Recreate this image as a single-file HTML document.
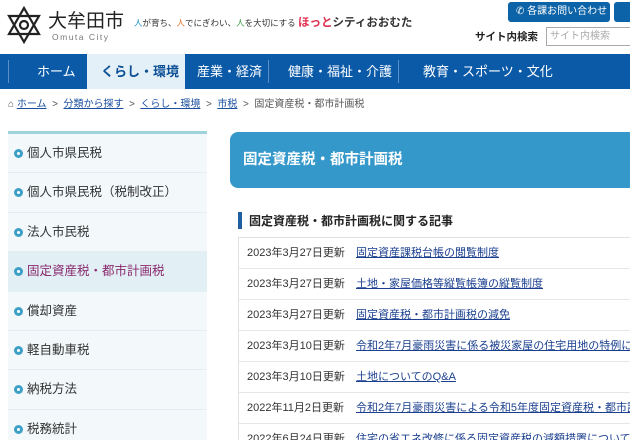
<!DOCTYPE html>
<html><head><meta charset="utf-8"><style>
*{margin:0;padding:0;box-sizing:border-box}
html,body{width:630px;height:440px;overflow:hidden}
body{background:#fff;font-family:"Liberation Sans","Noto Sans CJK JP",sans-serif;color:#333;position:relative}
.a{position:absolute;white-space:nowrap}
.nav{position:absolute;left:0;top:54px;width:630px;height:35px;background:#0b5aa8;overflow:hidden}
.nav span{position:absolute;top:0;height:35px;line-height:35px;color:#fff;font-size:13px}
.sep{position:absolute;top:6px;width:1px;height:23px;background:#5b8fc8}
.side{position:absolute;left:8px;top:131px;width:199px;border-top:3px solid #9fd3da;background:#f3f9fb}
.side div{height:39.4px;border-bottom:1px solid #e3eef2;font-size:12.5px;line-height:39px;padding-left:19px;position:relative;color:#333}
.side div:before{content:"";position:absolute;left:6px;top:15px;width:9px;height:9px;border-radius:50%;background:#3b9fc6}
.side div:after{content:"";position:absolute;left:9px;top:18px;width:3px;height:3px;background:#fff;border-radius:50%}
.side .on{background:#e2eff5;color:#8a2a6e}
.rows{position:absolute;left:238px;top:237px;width:392px;border:1px solid #e2e2e2;border-right:none;overflow:hidden}
.rows div{height:31px;line-height:31px;border-bottom:1px solid #e6e6e6;font-size:11px;padding-left:8px;white-space:nowrap;overflow:hidden}
.rows b{font-weight:normal;display:inline-block;width:109px;color:#333}
.rows u{color:#1a3f8f}
</style></head><body>
<svg class="a" style="left:6px;top:6px" width="36" height="38" viewBox="0 0 36 38"><g fill="none" stroke="#222" stroke-width="2.2"><path d="M18 2 L33 28 L3 28 Z"/><path d="M18 36 L3 10 L33 10 Z"/><circle cx="18" cy="19" r="4"/></g></svg>
<div class="a" style="left:48px;top:6px;font-size:19px;color:#222;letter-spacing:0">大牟田市</div>
<div class="a" style="left:52px;top:32px;font-size:8.5px;color:#777;letter-spacing:1.5px">Omuta City</div>
<div class="a" style="left:134px;top:14px;font-size:8.5px;color:#333"><span style="color:#1d8fc4">人</span>が育ち、<span style="color:#e07020">人</span>でにぎわい、<span style="color:#3a9a40">人</span>を大切にする <span style="color:#e03050;font-size:11.5px;font-weight:bold">ほっと</span><span style="font-size:11.5px;font-weight:bold">シティおおむた</span></div>
<div class="a" style="left:508px;top:2px;width:102px;height:20px;background:#0c63a8;border-radius:3px;color:#fff;font-size:10px;line-height:20px;padding-left:8px">✆ 各課お問い合わせ</div>
<div class="a" style="left:614px;top:2px;width:30px;height:20px;background:#0c63a8;border-radius:3px"></div>
<div class="a" style="left:475px;top:29px;font-size:10.5px;font-weight:bold;color:#222">サイト内検索</div>
<div class="a" style="left:546px;top:27px;width:90px;height:19px;border:1px solid #aaa;font-size:10px;color:#aaa;line-height:17px;padding-left:3px">サイト内検索</div>
<div class="nav">
<div class="sep" style="left:8px"></div>
<span style="left:37px">ホーム</span>
<div style="position:absolute;left:87px;top:0;width:98px;height:35px;background:#e4f0f7"></div>
<span style="left:101px;color:#0b4f95;font-weight:bold">くらし・環境</span>
<span style="left:197px">産業・経済</span>
<div class="sep" style="left:268px"></div>
<span style="left:288px">健康・福祉・介護</span>
<div class="sep" style="left:398px"></div>
<span style="left:423px">教育・スポーツ・文化</span>
</div>
<div class="a" style="left:8px;top:95px;font-size:10px;color:#555">⌂ <u style="color:#1a4f9f">ホーム</u> &nbsp;&gt;&nbsp; <u style="color:#1a4f9f">分類から探す</u> &nbsp;&gt;&nbsp; <u style="color:#1a4f9f">くらし・環境</u> &nbsp;&gt;&nbsp; <u style="color:#1a4f9f">市税</u> &nbsp;&gt;&nbsp; 固定資産税・都市計画税</div>
<div class="side">
<div>個人市県民税</div><div>個人市県民税（税制改正）</div><div>法人市民税</div><div class="on">固定資産税・都市計画税</div><div>償却資産</div><div>軽自動車税</div><div>納税方法</div><div>税務統計</div>
</div>
<div class="a" style="left:230px;top:132px;width:400px;height:56px;background:#3598cb;border-radius:8px 0 0 8px;color:#fff;font-size:14.5px;font-weight:bold;line-height:56px;padding-left:13px">固定資産税・都市計画税</div>
<div class="a" style="left:238px;top:212px;width:4px;height:17px;background:#1f5f9f"></div>
<div class="a" style="left:249px;top:212px;font-size:12px;font-weight:bold;color:#222">固定資産税・都市計画税に関する記事</div>
<div class="rows">
<div><b>2023年3月27日更新</b><u>固定資産課税台帳の閲覧制度</u></div>
<div><b>2023年3月27日更新</b><u>土地・家屋価格等縦覧帳簿の縦覧制度</u></div>
<div><b>2023年3月27日更新</b><u>固定資産税・都市計画税の減免</u></div>
<div><b>2023年3月10日更新</b><u>令和2年7月豪雨災害に係る被災家屋の住宅用地の特例について</u></div>
<div><b>2023年3月10日更新</b><u>土地についてのQ&amp;A</u></div>
<div><b>2022年11月2日更新</b><u>令和2年7月豪雨災害による令和5年度固定資産税・都市計画税</u></div>
<div><b>2022年6月24日更新</b><u>住宅の省エネ改修に係る固定資産税の減額措置について</u></div>
</div>
</body></html>
